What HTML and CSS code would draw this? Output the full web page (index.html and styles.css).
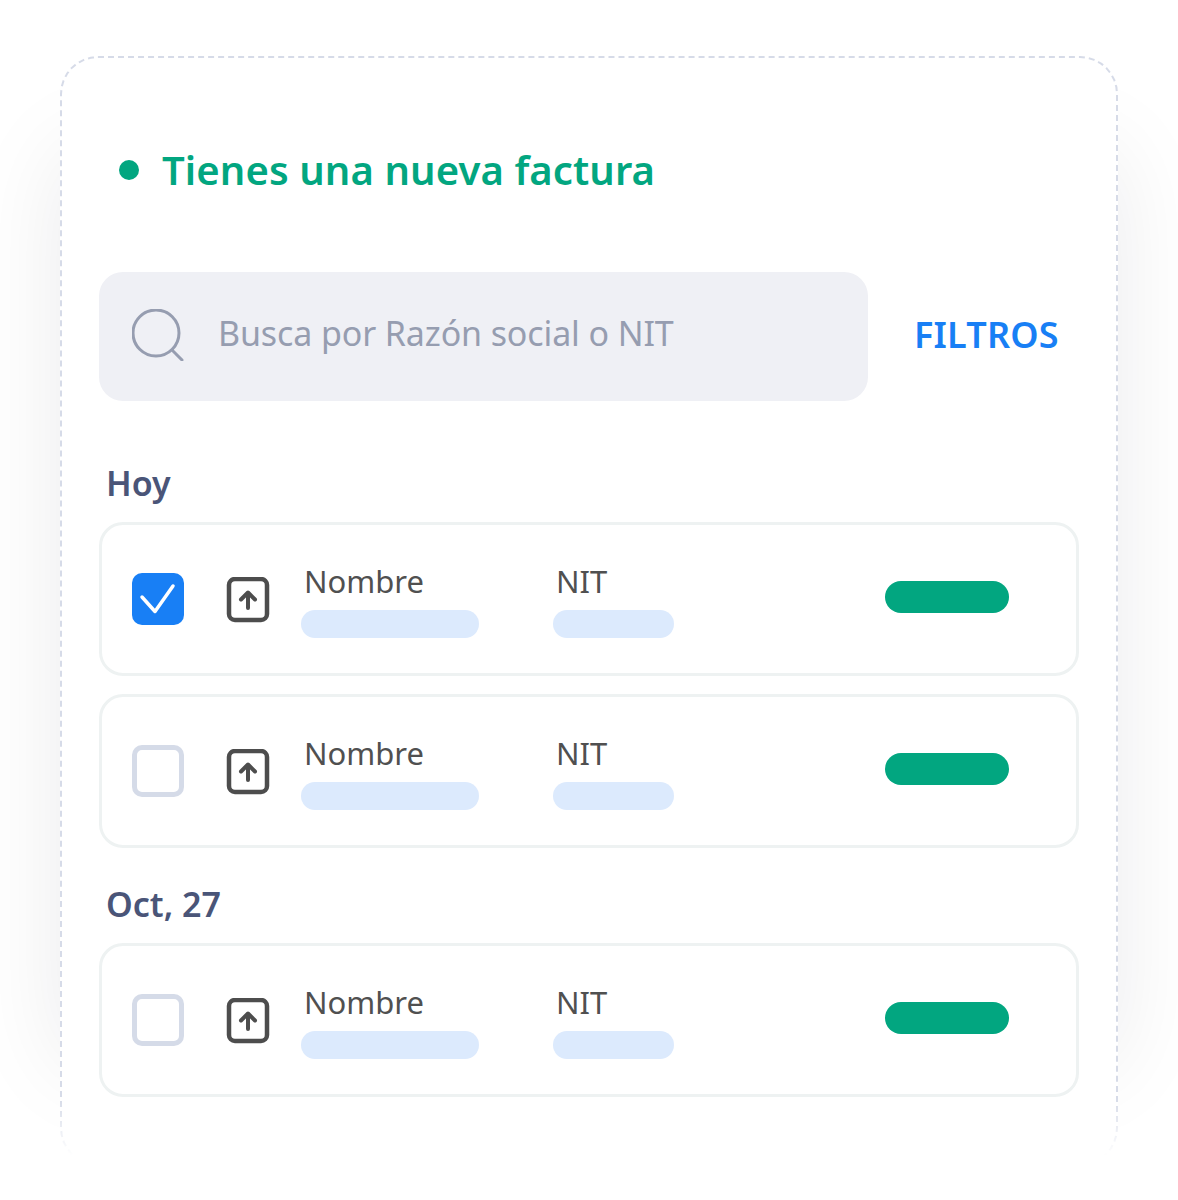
FILE: index.html
```html
<!DOCTYPE html>
<html lang="es">
<head>
    <meta charset="UTF-8">
    <meta name="viewport" content="width=device-width, initial-scale=1.0">
    <title>Facturas</title>
    <link rel="stylesheet" href="styles.css">
</head>
<body>
    <div class="panel">
        <div class="notice">
            <span class="notice-dot"></span>
            <h1>Tienes una nueva factura</h1>
        </div>

        <div class="toolbar">
            <div class="search">
                <svg class="search-icon" viewBox="0 0 52 52" fill="none">
                    <circle cx="24" cy="24" r="23" stroke="#969db0" stroke-width="3"/>
                    <path d="M40 41l10 10" stroke="#969db0" stroke-width="3" stroke-linecap="round"/>
                </svg>
                <span class="search-text">Busca por Razón social o NIT</span>
            </div>
            <a class="filters">FILTROS</a>
        </div>

        <h2 class="group-title">Hoy</h2>
        <div class="row">
            <span class="check checked">
                <svg viewBox="0 0 52 52" fill="none">
                    <path d="M10 24l13 14.500L41 13" stroke="#fff" stroke-width="3.500" stroke-linecap="round" stroke-linejoin="round"/>
                </svg>
            </span>
            <svg class="doc-icon" viewBox="0 0 44 46" fill="none">
                <rect x="3" y="2" width="38" height="41" rx="6" stroke="#4d4d4d" stroke-width="4.500"/>
                <path d="M22 31V16M15 22.500L22 15.500l7 7" stroke="#4d4d4d" stroke-width="4" stroke-linecap="round" stroke-linejoin="round"/>
            </svg>
            <div class="field field-name">
                <span>Nombre</span>
                <i class="bar"></i>
            </div>
            <div class="field field-nit">
                <span>NIT</span>
                <i class="bar"></i>
            </div>
            <i class="pill"></i>
        </div>
        <div class="row">
            <span class="check"></span>
            <svg class="doc-icon" viewBox="0 0 44 46" fill="none">
                <rect x="3" y="2" width="38" height="41" rx="6" stroke="#4d4d4d" stroke-width="4.500"/>
                <path d="M22 31V16M15 22.500L22 15.500l7 7" stroke="#4d4d4d" stroke-width="4" stroke-linecap="round" stroke-linejoin="round"/>
            </svg>
            <div class="field field-name">
                <span>Nombre</span>
                <i class="bar"></i>
            </div>
            <div class="field field-nit">
                <span>NIT</span>
                <i class="bar"></i>
            </div>
            <i class="pill"></i>
        </div>

        <h2 class="group-title second">Oct, 27</h2>
        <div class="row">
            <span class="check"></span>
            <svg class="doc-icon" viewBox="0 0 44 46" fill="none">
                <rect x="3" y="2" width="38" height="41" rx="6" stroke="#4d4d4d" stroke-width="4.500"/>
                <path d="M22 31V16M15 22.500L22 15.500l7 7" stroke="#4d4d4d" stroke-width="4" stroke-linecap="round" stroke-linejoin="round"/>
            </svg>
            <div class="field field-name">
                <span>Nombre</span>
                <i class="bar"></i>
            </div>
            <div class="field field-nit">
                <span>NIT</span>
                <i class="bar"></i>
            </div>
            <i class="pill"></i>
        </div>
    </div>
</body>
</html>
```

FILE: styles.css
```css
* {
    box-sizing: border-box;
}

html {
    background-color: #ffffff;
}

html, body {
    margin: 0;
    padding: 0;
    height: 1200px;
    overflow: hidden;
    font-family: "Noto Sans", sans-serif;
}

.panel {
    position: relative;
    width: 1058px;
    height: 1110px;
    margin: 56px 0 0 60px;
    padding: 0 37px;
    background-color: #ffffff;
    border: 2px dashed #d6dbe8;
    border-radius: 38px;
}

/* soft shadow, starts lower than the panel and ends before its bottom */
.panel::before {
    content: "";
    position: absolute;
    z-index: -1;
    top: 95px;
    bottom: 100px;
    left: 0;
    right: 0;
    box-shadow: 0 0 90px rgba(20, 20, 35, 0.085);
}

/* white fade over the bottom of the panel */
.panel::after {
    content: "";
    position: absolute;
    left: -2px;
    right: -2px;
    bottom: -2px;
    height: 68px;
    background: linear-gradient(to bottom, rgba(255, 255, 255, 0), #ffffff 85%);
}

.notice {
    display: flex;
    align-items: center;
    gap: 23px;
    height: 52px;
    margin: 86px 0 0 20px;
}

.notice-dot {
    width: 20px;
    height: 20px;
    border-radius: 50%;
    background-color: #02a680;
}

.notice h1 {
    margin: 0;
    font-size: 40px;
    font-weight: 600;
    line-height: 52px;
    letter-spacing: 0.1px;
    color: #02a680;
}

.toolbar {
    display: flex;
    align-items: center;
    margin-top: 76px;
}

.search {
    display: flex;
    align-items: center;
    gap: 35px;
    width: 769px;
    height: 129px;
    padding-left: 33px;
    background-color: #eff0f5;
    border-radius: 24px;
    font-size: 34px;
    color: #969db0;
}

.search-icon {
    width: 52px;
    height: 52px;
    margin-bottom: 3px;
}

.search-text {
    margin: 0 0 7px -1px;
    letter-spacing: -0.12px;
}

.filters {
    margin: 0 0 4px 46px;
    font-size: 36px;
    font-weight: 600;
    letter-spacing: 0.2px;
    color: #187ff5;
}

.group-title {
    margin: 59px 0 0 7px;
    height: 46px;
    font-size: 34px;
    font-weight: 600;
    line-height: 46px;
    color: #4a5578;
}

.group-title.second {
    margin-top: 33px;
}

.row {
    display: flex;
    align-items: flex-start;
    height: 154px;
    margin-top: 18px;
    padding-left: 30px;
    border: 3px solid #eef2f2;
    border-radius: 24px;
}

.group-title + .row {
    margin-top: 16px;
}

.check {
    width: 52px;
    height: 52px;
    margin-top: 48px;
    border: 5px solid #d5dbe8;
    border-radius: 10px;
}

.check.checked {
    background-color: #187ff5;
    border: none;
}

.check svg {
    display: block;
}

.doc-icon {
    width: 44px;
    height: 46px;
    margin: 52px 31px 0 42px;
}

.field {
    display: flex;
    flex-direction: column;
    margin-top: 34px;
    font-size: 31px;
    line-height: 44px;
    color: #505050;
}

.field span {
    padding-left: 3px;
}

.bar {
    display: block;
    height: 28px;
    margin-top: 7px;
    border-radius: 14px;
    background-color: #dceafd;
}

.field-name {
    width: 178px;
}

.field-nit {
    width: 121px;
    margin-left: 74px;
}

.pill {
    width: 124px;
    height: 32px;
    margin: 56px 0 0 211px;
    border-radius: 16px;
    background-color: #02a680;
}
```
